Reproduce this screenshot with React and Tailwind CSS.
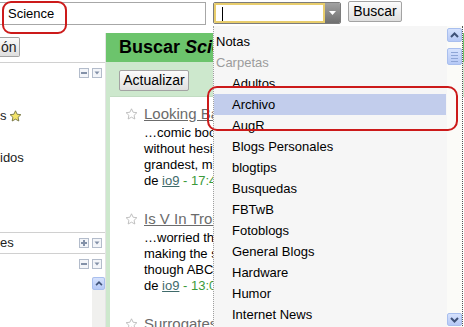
import React from "react";

const Star = ({ filled }) => (
  <svg width="13" height="12" viewBox="0 0 24 23" className="shrink-0">
    <path
      d="M12 1.5l3.1 6.6 7.2.9-5.3 5 1.4 7.1L12 17.6l-6.4 3.5 1.4-7.1-5.3-5 7.2-.9z"
      fill={filled ? "#f3e46a" : "none"}
      stroke={filled ? "#6f7040" : "#b9b9b9"}
      strokeWidth="1.7"
      strokeLinejoin="round"
    />
  </svg>
);

const Mini = ({ kind }) => (
  <div className="w-[10px] h-[10px] border border-[#b3bccb] bg-[#f3f5f9] flex items-center justify-center">
    <svg width="8" height="8" viewBox="0 0 8 8">
      {kind === "minus" && <rect x="1" y="3" width="6" height="2" fill="#8391a8" />}
      {kind === "plus" && (
        <>
          <rect x="1" y="3" width="6" height="2" fill="#8391a8" />
          <rect x="3" y="1" width="2" height="6" fill="#8391a8" />
        </>
      )}
      {kind === "down" && <path d="M1.5 2.5h5L4 5.5z" fill="#8391a8" />}
    </svg>
  </div>
);

const XpBtn = ({ dir, h = "h-[14px]" }) => (
  <div
    className={`w-[15px] ${h} rounded-[2px] border border-[#a9bfee] bg-gradient-to-b from-[#d6e2fd] to-[#b6c9f6] flex items-center justify-center`}
  >
    <svg width="9" height="6" viewBox="0 0 9 6">
      <path
        d={dir === "up" ? "M1 5L4.5 1.5 8 5" : "M1 1l3.5 3.5L8 1"}
        fill="none"
        stroke="#3f5278"
        strokeWidth="2"
      />
    </svg>
  </div>
);

const Entry = ({ title, lines, time, className = "" }) => (
  <div className={`flex ${className}`}>
    <div className="w-[34px] shrink-0 pl-[15px] pt-[4px]">
      <Star />
    </div>
    <div className="whitespace-nowrap">
      <div className="h-[20px] text-[15px] leading-[20px] text-[#6b6b6b] underline">{title}</div>
      <div className="mt-[1px] text-[13px] leading-[16px] text-black">
        {lines.map((l, i) => (
          <div key={i}>{l}</div>
        ))}
        {time && (
          <div>
            de <span className="underline text-[#3f6a6a]">io9</span>{" "}
            <span className="text-[#3a9a3a]">- {time}</span>
          </div>
        )}
      </div>
    </div>
  </div>
);

const items = [
  { t: "Notas", lvl: 0 },
  { t: "Carpetas", lvl: 0, grey: true },
  { t: "Adultos", lvl: 1 },
  { t: "Archivo", lvl: 1, sel: true },
  { t: "AugR", lvl: 1 },
  { t: "Blogs Personales", lvl: 1 },
  { t: "blogtips", lvl: 1 },
  { t: "Busquedas", lvl: 1 },
  { t: "FBTwB", lvl: 1 },
  { t: "Fotoblogs", lvl: 1 },
  { t: "General Blogs", lvl: 1 },
  { t: "Hardware", lvl: 1 },
  { t: "Humor", lvl: 1 },
  { t: "Internet News", lvl: 1 },
];

export default function App() {
  return (
    <div className="relative w-[464px] h-[327px] overflow-hidden bg-white text-black font-['Liberation_Sans',Arial,sans-serif]">
      {/* top bar */}
      <div className="flex h-[33px] items-start">
        <div className="ml-[-1px] mt-[2px] w-[207px] h-[23px] border border-[#a7a7a7] bg-white pl-[8px] text-[13px] leading-[21px]">
          Science
        </div>
        <div className="ml-[7px] mt-[2px] w-[128px] h-[22px] flex border border-[#7c7c7c] rounded-[2px] overflow-hidden">
          <div className="flex-1 border-2 border-[#e8cd6c] bg-white pl-[6px] pt-[2px]">
            <div className="w-[1px] h-[14px] bg-black" />
          </div>
          <div className="w-[15px] bg-gradient-to-b from-[#a2a2a2] to-[#707070] flex items-center justify-center">
            <svg width="7" height="4" viewBox="0 0 7 4">
              <path d="M0 0h7L3.5 4z" fill="#ffffff" />
            </svg>
          </div>
        </div>
        <div className="ml-[7px] mt-[1px] w-[54px] h-[21px] border border-[#a3a3a3] rounded-[2px] bg-gradient-to-b from-[#fcfcfc] to-[#dfdfdf] text-[14px] leading-[19px] text-center">
          Buscar
        </div>
      </div>

      {/* main */}
      <div className="flex h-[294px]">
        {/* left panel */}
        <div className="w-[106px] shrink-0 border-r border-[#e4e4e4] flex flex-col text-[13px] text-[#222]">
          <div className="h-[30px] border-b border-[#d0d0d0] pt-[4px]">
            <div className="w-[20px] h-[20px] border border-l-0 border-[#a3a3a3] rounded-r-[2px] bg-gradient-to-b from-[#fbfbfb] to-[#dedede] text-[14px] leading-[18px] pl-[1px]">
              ón
            </div>
          </div>
          <div className="h-[170px] border-b border-[#d0d0d0] flex flex-col">
            <div className="flex justify-end gap-[3px] pr-[3px] mt-[5px]">
              <Mini kind="minus" />
              <Mini kind="down" />
            </div>
            <div className="mt-[30px] flex items-center gap-[2px] h-[16px] leading-[16px]">
              <span>s</span>
              <Star filled />
            </div>
            <div className="mt-[26px] leading-[16px]">idos</div>
          </div>
          <div className="h-[21px] border-b border-[#d0d0d0] flex items-center justify-between pr-[3px]">
            <span className="leading-[16px]">es</span>
            <div className="flex gap-[3px]">
              <Mini kind="plus" />
              <Mini kind="down" />
            </div>
          </div>
          <div className="flex-1 flex flex-col">
            <div className="flex justify-end gap-[3px] pr-[3px] mt-[5px]">
              <Mini kind="minus" />
              <Mini kind="down" />
            </div>
            <div className="flex-1 flex justify-end mt-[8px]">
              <div className="w-[13px] bg-[#f0f0ee] flex flex-col">
                <div className="w-[13px] h-[13px] rounded-[2px] border border-[#a9bfee] bg-gradient-to-b from-[#d6e2fd] to-[#b6c9f6] flex items-center justify-center">
                  <svg width="8" height="5" viewBox="0 0 9 6">
                    <path d="M1 5L4.5 1.5 8 5" fill="none" stroke="#3f5278" strokeWidth="2" />
                  </svg>
                </div>
              </div>
            </div>
          </div>
        </div>

        {/* green panel */}
        <div className="flex-1 min-w-0 flex flex-col bg-[#cde8cd]">
          <div className="h-[29px] bg-[#6cc46c] pl-[13px] flex items-center text-[18px] font-bold whitespace-nowrap">
            Buscar&nbsp;<i>Science</i>
          </div>
          <div className="h-[34px] pl-[13px] pt-[8px]">
            <div className="w-[70px] h-[21px] border border-[#a3a3a3] rounded-[2px] bg-gradient-to-b from-[#fcfcfc] to-[#dfdfdf] text-[14px] leading-[19px] text-center">
              Actualizar
            </div>
          </div>
          <div className="flex-1 ml-[4px] bg-white border-t border-[#c2dcc2] pt-[7px] overflow-hidden">
            <Entry
              title="Looking Back at Science Fiction"
              lines={["…comic book writers", "without hesitation the", "grandest, most"]}
              time="17:45"
            />
            <Entry
              className="mt-[20px]"
              title="Is V In Trouble?"
              lines={["…worried that", "making the show", "though ABC"]}
              time="13:05"
            />
            <Entry className="mt-[20px]" title="Surrogates" lines={[]} />
          </div>
        </div>
      </div>

      {/* dropdown list overlay */}
      <div className="absolute left-[213px] top-[26px] w-[250px] h-[302px] flex bg-[#f6f6f6] border-l border-[#a0a0a0] border-r border-r-[#555] border-dotted">
        <div className="w-[232px] pt-[5px] text-[13px] text-black">
          {items.map((it) => (
            <div
              key={it.t}
              className={`h-[21px] leading-[21px] whitespace-nowrap ${it.lvl ? "pl-[18px]" : "pl-[2px]"} ${
                it.sel ? "bg-[#c2cdec]" : ""
              } ${it.grey ? "text-[#9c9c9c]" : ""}`}
            >
              {it.t}
            </div>
          ))}
        </div>
        <div className="ml-[1px] w-[15px] bg-[#fbfbf8] flex flex-col pt-[2px]">
          <XpBtn dir="up" />
          <div className="mt-[6px] w-[15px] h-[17px] rounded-[2px] border border-[#a9bfee] bg-gradient-to-b from-[#d6e2fd] to-[#b6c9f6] flex flex-col items-center justify-center gap-[2px]">
            <div className="w-[7px] h-[1px] bg-[#8ea5d6]" />
            <div className="w-[7px] h-[1px] bg-[#8ea5d6]" />
            <div className="w-[7px] h-[1px] bg-[#8ea5d6]" />
            <div className="w-[7px] h-[1px] bg-[#8ea5d6]" />
          </div>
          <div className="flex-1" />
          <div className="mb-[2px]">
            <XpBtn dir="down" h="h-[13px]" />
          </div>
        </div>
      </div>

      {/* red annotations */}
      <div className="absolute left-[2px] top-[1px] w-[65px] h-[33px] border-2 border-[#cc1a1a] rounded-[9px]" />
      <div className="absolute left-[207px] top-[86px] w-[251px] h-[45px] border-2 border-[#cc1a1a] rounded-[10px]" />
    </div>
  );
}
